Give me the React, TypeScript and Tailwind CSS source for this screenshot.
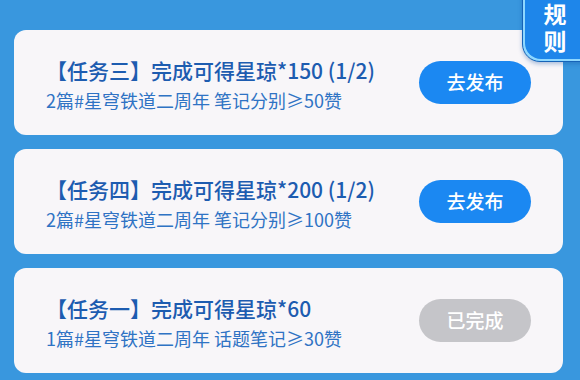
const tasks = [
  { title: '【任务三】完成可得星琼*150 (1/2)', desc: '2篇#星穹铁道二周年 笔记分别≥50赞', done: false },
  { title: '【任务四】完成可得星琼*200 (1/2)', desc: '2篇#星穹铁道二周年 笔记分别≥100赞', done: false },
  { title: '【任务一】完成可得星琼*60', desc: '1篇#星穹铁道二周年 话题笔记≥30赞', done: true },
]

export default function App() {
  return (
    <div
      className="relative w-[580px] h-[380px] overflow-hidden bg-[#3997de]"
      style={{ fontFamily: '"Noto Sans CJK SC", "Noto Sans", sans-serif' }}
    >
      {/* rules badge */}
      <div className="absolute right-[-20px] top-[-20px] w-[78px] h-[82px] rounded-bl-[18px] border border-[#1663b8] bg-[#8fd8ff] p-[2px] shadow-[0_2px_4px_rgba(20,80,160,0.35)]">
        <div className="flex h-full w-full items-start overflow-hidden rounded-bl-[16px] bg-[#1e86ea] pl-[17px] pt-[20px]">
          <span className="whitespace-nowrap text-[23px] font-bold leading-[26px] tracking-[4px] text-white [writing-mode:vertical-rl]">
            规则
          </span>
        </div>
      </div>

      <div className="flex flex-col gap-[14px] pt-[30px] pl-[14px] pr-[17px]">
        {tasks.map((t) => (
          <div
            key={t.title}
            className="flex h-[105px] items-center justify-between rounded-[12px] bg-[#f8f6f9] px-8"
          >
            <div className="flex flex-col pt-1">
              <div className="text-[21px] font-medium leading-[30px] text-[#1d5cb0]">{t.title}</div>
              <div className="text-[18px] leading-[30px] text-[#2f73c4]">{t.desc}</div>
            </div>
            <div
              className={
                t.done
                  ? 'flex h-[43px] w-[112px] items-center justify-center rounded-full bg-[#c5c5c9] text-[19px] font-medium text-white'
                  : 'flex h-[43px] w-[112px] items-center justify-center rounded-full bg-[#1b88f2] text-[19px] font-medium text-white'
              }
            >
              {t.done ? '已完成' : '去发布'}
            </div>
          </div>
        ))}
      </div>
    </div>
  )
}
